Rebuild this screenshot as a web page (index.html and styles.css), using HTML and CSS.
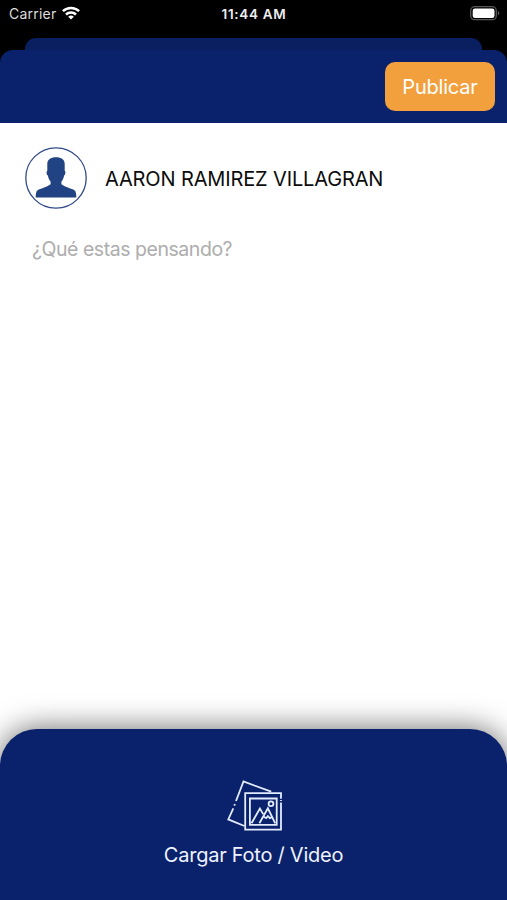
FILE: index.html
```html
<!DOCTYPE html>
<html lang="es">
<head>
<meta charset="utf-8">
<meta name="viewport" content="width=device-width">
<title>Publicar</title>
<link rel="stylesheet" href="styles.css">
</head>
<body>
<div class="screen">
  <div class="status">
    <div class="carrier"><span class="carrier-name">Carrier</span>
      <svg class="wifi" viewBox="0 0 18 14" width="18" height="14"><g fill="none" stroke="#fff" stroke-width="2.5"><path d="M.9 5.2a11.6 11.6 0 0 1 16.2 0"/><path d="M4 8.5a7.2 7.2 0 0 1 10 0"/></g><path d="M9 13.6 6.2 10.8a4 4 0 0 1 5.6 0z" fill="#fff"/></svg>
    </div>
    <time class="clock">11:44 AM</time>
    <svg class="battery" viewBox="0 0 30 15" width="30" height="15"><rect x=".7" y=".7" width="25.6" height="13" rx="4" fill="none" stroke="#58585a" stroke-width="1.3"/><rect x="2.7" y="2.4" width="21.8" height="9.7" rx="2.3" fill="#fff"/><path d="M27.8 5c2 .7 2 3.700 0 4.400z" fill="#58585a"/></svg>
  </div>
  <div class="back-card"></div>
  <header class="header"><button class="publish">Publicar</button></header>
  <main class="composer">
    <div class="user">
      <svg class="avatar" viewBox="0 0 62 62" width="62" height="62"><circle cx="31" cy="31" r="30.200" fill="#fff" stroke="#324b88" stroke-width="1.300"/><path d="M31 10.200C36.500 10.200 39.700 12.500 39.700 17v7c1.300.2.800 3.800-.6 4.600-.5 3-1.500 4.600-2.700 6v2.600c2 1.500 4.600 2.600 7 3.500 2.500.9 4.600 1.500 6 2.500 1.600 1.200 1.900 3.500 1.900 7.300H10.700c0-3.800.3-6.100 1.900-7.300 1.400-1 3.500-1.600 6-2.500 2.400-.9 5-2 7-3.500v-2.600c-1.200-1.400-2.200-3-2.700-6-1.400-.8-1.900-4.400-.6-4.600V17c0-4.500 3.200-6.800 8.700-6.800z" fill="#224383"/></svg>
      <span class="name">AARON RAMIREZ VILLAGRAN</span>
    </div>
    <p class="prompt">¿Qué estas pensando?</p>
  </main>
  <footer class="upload">
    <svg class="photos" viewBox="0 0 56 52" width="56" height="52" fill="none" stroke="#e3ecff" stroke-width="1.800"><path d="M45.200 11.700 17.500 1.500 10 21M8.900 24l-.6 1.600M7.300 28.300 2.300 39.400 18.500 46"/><path d="M55 22.500V49.700H19.200V13.200H55v5.600"/><path d="M23.900 18.500H50.700v26.400H23.900z"/><circle cx="45" cy="23.700" r="2.400"/><path d="m25.500 43.300 8.400-14.700 3.300 5.500M33.400 43.300l8.500-15 7.300 15M37.600 36.800l2.600 1.300 1.700-2 1.900 2 2.200-1"/><path d="M55 20.100v1"/></svg>
    <span class="upload-label">Cargar Foto / Video</span>
  </footer>
</div>
</body>
</html>
```
FILE: styles.css
```css
* { box-sizing: border-box; }
body { margin: 0; background: #000; font-family: Inter, "Liberation Sans", sans-serif; }
svg { display: block; }
.screen { height: 900px; width: 507px; display: flex; flex-direction: column; overflow: hidden; background: #000; }
.status { height: 38px; padding: 5px 7px 0 9px; display: grid; grid-template-columns: 1fr auto 1fr; align-items: start; color: #fff; }
.carrier { display: flex; gap: 6px; }
.carrier-name { font-size: 14px; line-height: 18px; color: #ddd; letter-spacing: .22px; }
.wifi { margin-top: 1px; }
.clock { font-size: 13.500px; line-height: 18px; font-weight: 600; color: #eee; letter-spacing: .7px; margin-left: -1px; }
.battery { justify-self: end; margin-top: 1px; }
.back-card { height: 12px; margin: 0 25px; border-radius: 11px 11px 0 0; background: #0a1f60; }
.header { height: 73px; padding: 12px 12px 0 0; display: flex; justify-content: flex-end; align-items: flex-start; background: #0a216b; border-radius: 13px 13px 0 0; }
.publish { width: 110px; height: 49px; padding: 1px 0 0; border: 0; border-radius: 10px; background: #f29f3d; color: #fff; font: 400 20px/48px Inter, sans-serif; letter-spacing: -.2px; }
.composer { flex: 1; background: #fff; margin-bottom: -40px; padding: 24px 25px 0; }
.user { display: flex; align-items: center; gap: 18px; }
.name { margin-top: 2px; font-size: 20px; line-height: 24px; color: #0c0c0c; white-space: nowrap; letter-spacing: -.14px; }
.prompt { margin: 27px 0 0 7px; font-size: 19.500px; line-height: 26px; color: #adadad; letter-spacing: -.46px; }
.upload { height: 171px; padding-top: 51px; display: flex; flex-direction: column; align-items: center; background: #0a216b; border-radius: 37px 37px 0 0; box-shadow: 0 0 30px rgba(0,0,0,.6); }
.upload-label { margin-top: 10px; font-size: 20px; line-height: 26px; color: #eef3ff; letter-spacing: -.25px; }
```
